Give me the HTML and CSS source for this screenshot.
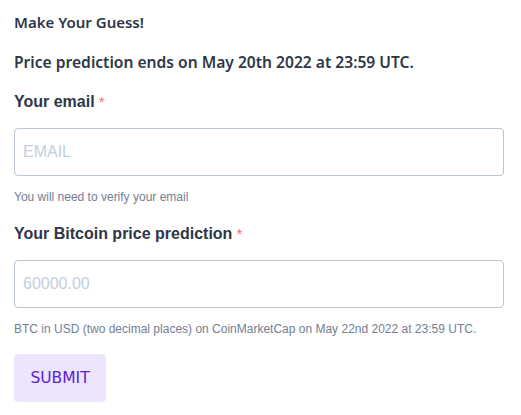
FILE: index.html
```html
<!DOCTYPE html>
<html>
<head>
<meta charset="utf-8">
<link rel="stylesheet" href="styles.css">
</head>
<body>
<form class="form">
  <p class="title">Make Your Guess!</p>
  <p class="subtitle">Price prediction ends on May 20th 2022 at 23:59 UTC.</p>
  <div class="field">
    <label class="label">Your email <span class="req">*</span></label>
    <input class="input" type="text" placeholder="EMAIL">
    <p class="help">You will need to verify your email</p>
  </div>
  <div class="field">
    <label class="label">Your Bitcoin price prediction <span class="req">*</span></label>
    <input class="input" type="text" placeholder="60000.00">
    <p class="help">BTC in USD (two decimal places) on CoinMarketCap on May 22nd 2022 at 23:59 UTC.</p>
  </div>
  <button class="submit" type="button">SUBMIT</button>
</form>
</body>
</html>
```

FILE: styles.css
```css
html, body {
  margin: 0;
  padding: 0;
  background: #fff;
}
.form {
  padding: 12px 17px 0 14px;
  display: flex;
  flex-direction: column;
  align-items: flex-start;
}
.title {
  margin: 0;
  font-family: "Noto Sans", sans-serif;
  font-weight: 600;
  font-size: 15px;
  line-height: 20px;
  color: #2d3748;
}
.subtitle {
  margin: 20px 0 0;
  font-family: "Noto Sans", sans-serif;
  font-weight: 600;
  font-size: 15.6px;
  line-height: 20px;
  color: #2d3748;
}
.field {
  display: flex;
  flex-direction: column;
  align-self: stretch;
}
.label {
  margin-top: 20px;
  font-family: "Liberation Sans", Arial, sans-serif;
  font-weight: bold;
  font-size: 16px;
  line-height: 20px;
  color: #2d3748;
}
.field + .field .label {
  margin-top: 19px;
}
.req {
  color: #f56565;
  font-size: 14px;
  font-weight: normal;
}
.input {
  margin-top: 16px;
  box-sizing: border-box;
  width: 490px;
  height: 48px;
  border: 1px solid #b8c6d6;
  border-radius: 4px;
  padding: 0 8px;
  font-family: "Liberation Sans", Arial, sans-serif;
  font-size: 16px;
  color: #2d3748;
  outline: none;
}
.input::placeholder {
  color: #c4d0de;
}
.help {
  margin: 13px 0 0;
  font-family: "Liberation Sans", Arial, sans-serif;
  font-size: 12px;
  line-height: 16px;
  color: #718096;
}
.submit {
  margin-top: 17px;
  width: 92px;
  height: 48px;
  background: #ede4fe;
  border: none;
  border-radius: 4px;
  color: #5b21d6;
  font-family: "DejaVu Sans", Verdana, sans-serif;
  font-size: 15.5px;
  padding: 0;
}
```
